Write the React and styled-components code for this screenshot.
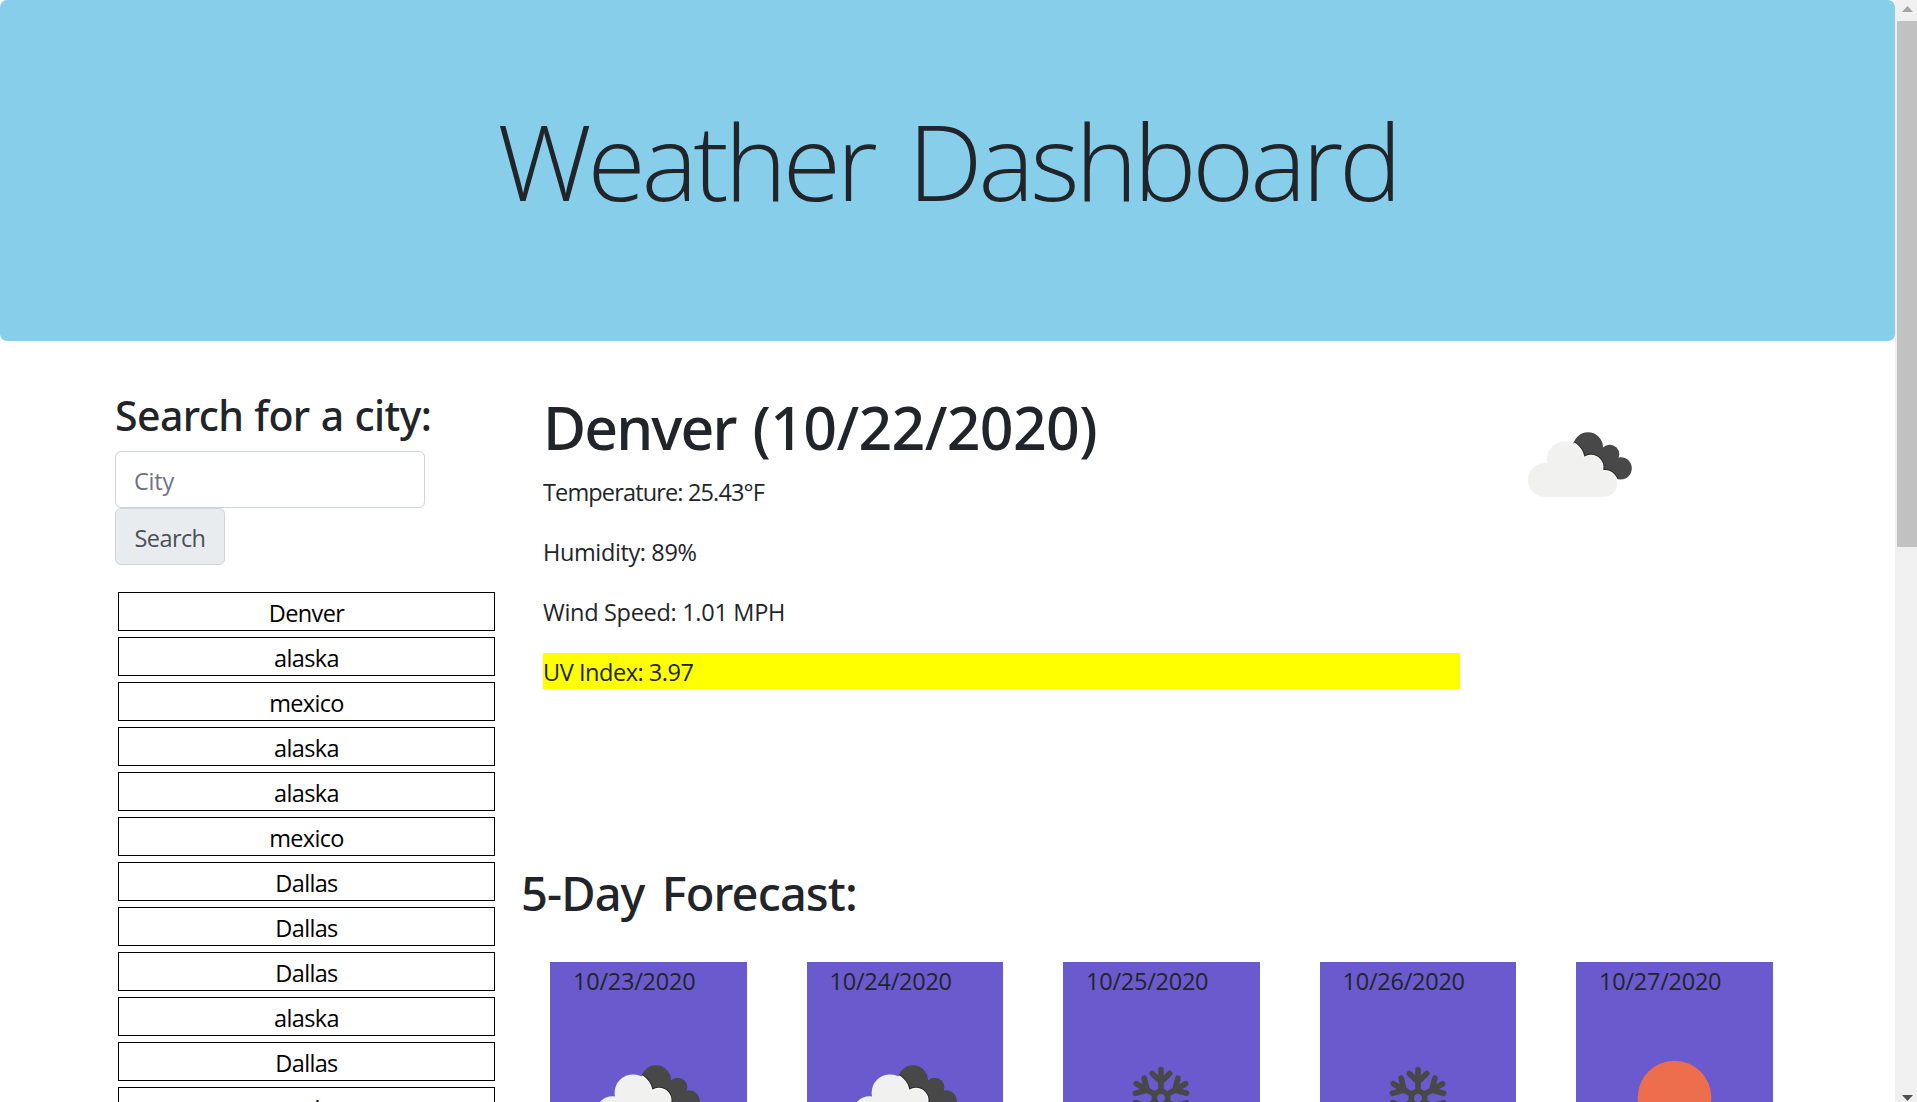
import React, { useId } from 'react';
import styled, { createGlobalStyle } from 'styled-components';

const GlobalStyle = createGlobalStyle`
  *, *::before, *::after { box-sizing: border-box; }
  body {
    margin: 0;
    background: #fff;
    color: #212529;
    font-family: "Open Sans", "Noto Sans", sans-serif;
    font-size: 23.5px;
    line-height: 36px;
    overflow: hidden;
  }
  h1, h2, h3, p, ul { margin: 0; padding: 0; }
`;

const Window = styled.div`
  display: flex;
  width: 1917px;
  height: 1102px;
  overflow: hidden;
`;

const Page = styled.div`
  flex: 1;
  min-width: 0;
`;

const Hero = styled.header`
  height: 341px;
  padding-top: 95px;
  border-radius: 7px;
  background: #87ceeb;
  text-align: center;
`;

const HeroTitle = styled.h1`
  font-size: 106px;
  font-weight: 300;
  line-height: 130px;
  letter-spacing: -4.3px;
  word-spacing: 11px;
  white-space: nowrap;
`;

const Columns = styled.div`
  display: flex;
  align-items: flex-start;
  padding: 48px 0 0 115px;
`;

const Sidebar = styled.aside`
  flex: none;
  width: 406px;
`;

const Heading = styled.h2`
  font-family: "Noto Sans", "Open Sans", sans-serif;
  font-weight: 500;
  white-space: nowrap;
  font-size: ${(p) => p.$size}px;
  line-height: ${(p) => p.$line}px;
  letter-spacing: ${(p) => p.$spacing}px;
  word-spacing: ${(p) => p.$gap || 0}px;
`;

const SearchHeading = styled(Heading)`
  padding-top: 2px;
`;

const Today = styled.span`
  letter-spacing: -0.65px;
`;

const SearchForm = styled.form`
  display: flex;
  flex-direction: column;
  align-items: flex-start;
  margin: 12px 0 27px;
`;

const CityInput = styled.input`
  width: 310px;
  height: 57px;
  padding: 2px 18px 0 18px;
  border: 1px solid #ced4da;
  border-radius: 6px;
  background: #fff;
  font: inherit;
  letter-spacing: -0.2px;
  color: #495057;
  outline: none;
  &::placeholder { color: #6c757d; opacity: 1; }
`;

const SearchButton = styled.button`
  width: 110px;
  height: 57px;
  padding: 2px 0 0;
  border: 1px solid #ced4da;
  border-radius: 6px;
  background: #e9ecef;
  font: inherit;
  letter-spacing: -0.6px;
  color: #495057;
`;

const CityList = styled.ul`
  display: flex;
  flex-direction: column;
  gap: 6px;
  padding-left: 3px;
  list-style: none;
`;

const CityItem = styled.li`
  width: 377px;
  height: 39px;
  padding-top: 2px;
  border: 1px solid #000;
  color: #000;
  text-align: center;
  letter-spacing: -0.65px;
`;

const Main = styled.main`
  flex: 1;
  min-width: 0;
`;

const Current = styled.section`
  display: flex;
  height: 475px;
  padding: 2px 0 0 22px;
`;

const Details = styled.div`
  display: flex;
  flex-direction: column;
  width: 917px;
`;

const Reading = styled.p`
  margin-bottom: 24px;
  padding-top: 2px;
  line-height: 34px;
  letter-spacing: ${(p) => p.$spacing}px;
  background: ${(p) => (p.$alert ? '#ff0' : 'transparent')};
`;

const Readings = styled.div`
  margin-top: 10px;
`;

const CurrentIcon = styled.div`
  display: flex;
  padding: 34px 0 0 60px;
`;

const Cards = styled.div`
  display: grid;
  grid-template-columns: repeat(5, 196.6px);
  column-gap: 59.9px;
  padding: 40px 0 0 29.1px;
`;

const Card = styled.article`
  display: flex;
  flex-direction: column;
  align-items: center;
  height: 420px;
  background: #6a5acd;
`;

const CardDate = styled.p`
  align-self: stretch;
  padding: 1px 0 59px 23px;
  letter-spacing: -0.25px;
`;

const IconSvg = styled.svg`
  display: block;
  flex: none;
  width: 120px;
  height: 80px;
`;

const Track = styled.div`
  display: flex;
  flex: none;
  flex-direction: column;
  align-items: flex-end;
  width: 22px;
  background: #f0f0f0;
`;

const Thumb = styled.div`
  width: 20px;
  height: 526px;
  margin-bottom: auto;
  background: #c1c1c1;
`;

const ArrowBox = styled.div`
  display: flex;
  justify-content: center;
  width: 20px;
  height: ${(p) => (p.$down ? 7 : 21)}px;
  padding-top: ${(p) => (p.$down ? 0 : 6)}px;
`;

function DarkCloud() {
  return (
    <>
      <circle cx="68" cy="22.3" r="15" />
      <circle cx="89.7" cy="29.3" r="9.6" />
      <circle cx="100.7" cy="43.3" r="11.1" />
      <path d="M68 22 L82 22 L90 28 L103 40 L98 54 L80 54 L62 36 Z" />
    </>
  );
}

function LightCloud() {
  return (
    <>
      <circle cx="45" cy="34.8" r="18.4" />
      <circle cx="24.5" cy="55" r="16.7" />
      <circle cx="71" cy="42.3" r="11.3" />
      <circle cx="84.5" cy="59" r="12.7" />
      <path d="M24.500 71.700 L24.500 50 L45 34 L71 40 L84.500 55 L84.500 71.700 Z" />
    </>
  );
}

function CloudsIcon() {
  const id = useId();
  return (
    <IconSvg viewBox="0 0 120 80">
      <clipPath id={id}><DarkCloud /></clipPath>
      <g fill="#484849"><DarkCloud /></g>
      <g clipPath={`url(#${id})`} fill="none" stroke="#2b2b2d" strokeWidth="4.500"><LightCloud /></g>
      <g fill="#f7f7f7" stroke="#f9f9f9" strokeWidth="2.400"
        clipPath={`url(#${id})`}><LightCloud /></g>
      <g fill="#f1f1f0"><LightCloud /></g>
    </IconSvg>
  );
}

function SnowIcon() {
  return (
    <IconSvg viewBox="0 0 120 80">
      <g fill="none" stroke="#484848" strokeWidth="5.600" strokeLinecap="round" strokeLinejoin="round">
        <circle cx="60" cy="40" r="6.800" />
        {[0, 60, 120, 180, 240, 300].map((a) => (
          <path key={a} transform={`rotate(${a} 60 40)`} d="M60 33 V11.500 M51.300 15.500 L60 24 L68.700 15.500" />
        ))}
      </g>
    </IconSvg>
  );
}

function SunIcon() {
  return (
    <IconSvg viewBox="0 0 120 80">
      <circle cx="60.500" cy="39.500" r="36.800" fill="#ec6e4c" />
    </IconSvg>
  );
}

const ICONS = { clouds: CloudsIcon, snow: SnowIcon, sun: SunIcon };

const CITIES = ['Denver', 'alaska', 'mexico', 'alaska', 'alaska', 'mexico', 'Dallas', 'Dallas', 'Dallas', 'alaska', 'Dallas', 'mexico'];

const READINGS = [
  { text: 'Temperature: 25.43°F', spacing: -0.85 },
  { text: 'Humidity: 89%', spacing: -0.38 },
  { text: 'Wind Speed: 1.01 MPH', spacing: -0.3 },
  { text: 'UV Index: 3.97', spacing: -0.45, alert: true },
];

const FORECAST = [
  { date: '10/23/2020', icon: 'clouds' },
  { date: '10/24/2020', icon: 'clouds' },
  { date: '10/25/2020', icon: 'snow' },
  { date: '10/26/2020', icon: 'snow' },
  { date: '10/27/2020', icon: 'sun' },
];

function Scrollbar() {
  return (
    <Track>
      <ArrowBox>
        <svg width="11" height="6" viewBox="0 0 11 6"><path d="M5.500 0 L11 6 H0 Z" fill="#a3a3a3" /></svg>
      </ArrowBox>
      <Thumb />
      <ArrowBox $down>
        <svg width="11" height="6" viewBox="0 0 11 6"><path d="M0 0 H11 L5.500 6 Z" fill="#505050" /></svg>
      </ArrowBox>
    </Track>
  );
}

export default function App() {
  return (
    <Window>
      <GlobalStyle />
      <Page>
        <Hero>
          <HeroTitle>Weather Dashboard</HeroTitle>
        </Hero>
        <Columns>
          <Sidebar>
            <SearchHeading $size={41} $line={48} $spacing={-0.6} $gap={1}>Search for a city:</SearchHeading>
            <SearchForm onSubmit={(e) => e.preventDefault()}>
              <CityInput placeholder="City" />
              <SearchButton type="submit">Search</SearchButton>
            </SearchForm>
            <CityList>
              {CITIES.map((city, i) => <CityItem key={i}>{city}</CityItem>)}
            </CityList>
          </Sidebar>
          <Main>
            <Current>
              <Details>
                <Heading $size={59} $line={72} $spacing={-1.9} $gap={3.5}>Denver <Today>(10/22/2020)</Today></Heading>
                <Readings>
                  {READINGS.map((r) => (
                    <Reading key={r.text} $spacing={r.spacing} $alert={r.alert}>{r.text}</Reading>
                  ))}
                </Readings>
              </Details>
              <CurrentIcon><CloudsIcon /></CurrentIcon>
            </Current>
            <Heading $size={47} $line={58} $spacing={-0.9} $gap={6}>5-Day Forecast:</Heading>
            <Cards>
              {FORECAST.map((day) => {
                const Icon = ICONS[day.icon];
                return (
                  <Card key={day.date}>
                    <CardDate>{day.date}</CardDate>
                    <Icon />
                  </Card>
                );
              })}
            </Cards>
          </Main>
        </Columns>
      </Page>
      <Scrollbar />
    </Window>
  );
}
